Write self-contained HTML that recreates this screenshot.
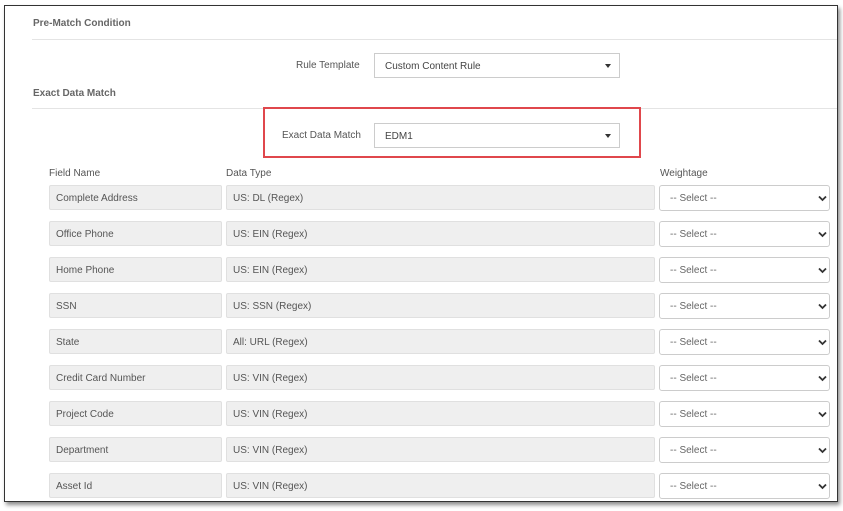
<!DOCTYPE html>
<html><head><style>
*{box-sizing:border-box;margin:0;padding:0}
body{width:843px;height:511px;background:#fff;font-family:"Liberation Sans",sans-serif;font-size:10px;color:#555;position:relative;overflow:hidden}
.frame{position:absolute;left:4px;top:5px;width:834px;height:497px;border:1px solid #333;box-shadow:2px 3px 4px rgba(0,0,0,.45);background:#fff}
.a{position:absolute}
.h{font-weight:bold;color:#666;font-size:10px}
.line{position:absolute;height:1px;background:#e4e4e4}
.sel{position:absolute;border:1px solid #ccc;background:#fff;padding-left:10px;line-height:25px;color:#444}
.sel::after{content:"";position:absolute;right:8px;top:10px;border-left:3.5px solid transparent;border-right:3.5px solid transparent;border-top:4px solid #333}
.f{position:absolute;height:25px;background:#efefef;border:1px solid #e0e0e0;border-radius:2px;padding-left:6px;line-height:25px;color:#555}
.w{position:absolute;left:659px;width:171px;height:26px;border:1px solid #ccc;border-radius:3px;background:#fff;padding-left:10px;line-height:25px;color:#666}
.w svg{position:absolute;right:2px;top:9px}
</style></head><body>
<div class="frame"></div>
<div class="a h" style="left:33px;top:18px">Pre-Match Condition</div>
<div class="line" style="left:32px;top:39px;width:805px"></div>
<div class="a" style="left:296px;top:60px">Rule Template</div>
<div class="sel" style="left:374px;top:53px;width:246px;height:25px">Custom Content Rule</div>
<div class="a h" style="left:33px;top:88px">Exact Data Match</div>
<div class="line" style="left:32px;top:108px;width:805px"></div>
<div class="a" style="left:263px;top:107px;width:378px;height:51px;border:2px solid #e0474c"></div>
<div class="a" style="left:282px;top:130px">Exact Data Match</div>
<div class="sel" style="left:374px;top:123px;width:246px;height:25px">EDM1</div>
<div class="a" style="left:49px;top:168px">Field Name</div>
<div class="a" style="left:226px;top:168px">Data Type</div>
<div class="a" style="left:660px;top:168px">Weightage</div>
<div id="rows"></div>
<script>
var r=[["Complete Address","US: DL (Regex)"],["Office Phone","US: EIN (Regex)"],["Home Phone","US: EIN (Regex)"],["SSN","US: SSN (Regex)"],["State","All: URL (Regex)"],["Credit Card Number","US: VIN (Regex)"],["Project Code","US: VIN (Regex)"],["Department","US: VIN (Regex)"],["Asset Id","US: VIN (Regex)"]];
var h="";r.forEach(function(x,i){var y=185+i*36;
h+='<div class="f" style="left:49px;top:'+y+'px;width:173px">'+x[0]+'</div><div class="f" style="left:226px;top:'+y+'px;width:429px">'+x[1]+'</div><div class="w" style="top:'+y+'px">-- Select --<svg width="9" height="7" viewBox="0 0 9 7"><path d="M1 1.5L4.5 5L8 1.5" stroke="#333" stroke-width="1.8" fill="none"/></svg></div>';});
document.getElementById("rows").innerHTML=h;
</script>
</body></html>
